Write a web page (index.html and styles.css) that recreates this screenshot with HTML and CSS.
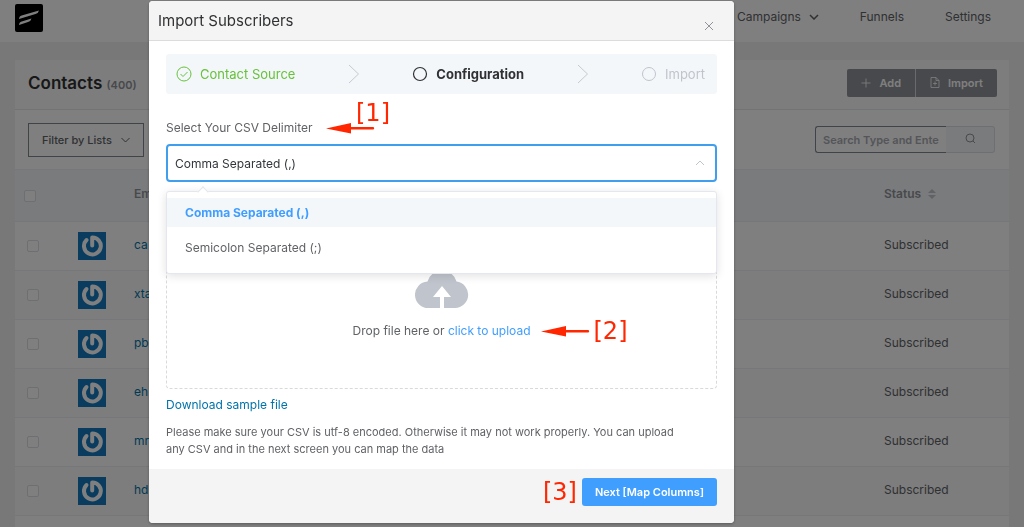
FILE: index.html
```html
<!DOCTYPE html>
<html lang="en">
<head>
    <meta charset="UTF-8">
    <meta name="viewport" content="width=device-width, initial-scale=1.0">
    <title>Import Subscribers</title>
    <link rel="stylesheet" href="styles.css">
</head>
<body>
    <svg class="symbols" aria-hidden="true">
        <symbol id="avatar" viewBox="0 0 28 28">
            <rect width="28" height="28" fill="#1279be"/>
            <path d="M8.500 8 A8.400 8.400 0 1 0 14.200 5.600 V13.500" fill="none" stroke="#fff" stroke-width="4" stroke-linecap="round" stroke-linejoin="round"/>
        </symbol>
        <symbol id="step-arrow" viewBox="0 0 12 20">
            <path d="M1 1 L10.500 10 L1 19" fill="none" stroke="#c6cad1" stroke-width="1"/>
        </symbol>
        <symbol id="red-arrow" viewBox="0 0 49 12">
            <path d="M0 6.500 L25 1 V5 H47.500 Q49 6 47.500 7.500 L25 7.500 V11.500 Z" fill="#ff2600"/>
        </symbol>
    </svg>

    <header class="topbar">
        <a href="#" class="logo" aria-label="Home">
            <svg width="28" height="28" viewBox="0 0 28 28">
                <rect width="28" height="28" rx="2" fill="#000"/>
                <path d="M4 15 Q4 12 7.500 11.200 L24 6.500 Q23.500 9 20.500 10 Z" fill="#fff"/>
                <path d="M4 21 Q4 18 7.500 17.200 L16.500 14.500 Q16 17 13 18 Z" fill="#fff"/>
            </svg>
        </a>
        <nav class="nav">
            <a href="#">Campaigns
                <svg width="10" height="6" viewBox="0 0 10 6"><path d="M1 1 L5 5 L9 1" fill="none" stroke="currentColor" stroke-width="1.500"/></svg>
            </a>
            <a href="#">Funnels</a>
            <a href="#">Settings</a>
        </nav>
    </header>

    <main class="card">
        <div class="card-header">
            <h1>Contacts <small>(400)</small></h1>
            <div class="button-group">
                <button type="button">
                    <svg width="10" height="10" viewBox="0 0 10 10"><path d="M5 0.500 V9.500 M0.500 5 H9.500" stroke="currentColor" stroke-width="0.800"/></svg>
                    Add
                </button>
                <button type="button">
                    <svg width="10" height="11" viewBox="0 0 10 11"><path d="M1 0.500 H6 L9 3.500 V10.500 H1 Z M6 0.500 V3.500 H9 M5 4.500 V8.500 M3 6.500 H7" fill="none" stroke="currentColor" stroke-width="0.800"/></svg>
                    Import
                </button>
            </div>
        </div>
        <div class="toolbar">
            <button type="button" class="filter">Filter by Lists
                <svg width="9" height="6" viewBox="0 0 9 6"><path d="M0.500 1 L4.500 5 L8.500 1" fill="none" stroke="currentColor"/></svg>
            </button>
            <div class="search">
                <input type="text" placeholder="Search Type and Enter..." aria-label="Search">
                <button type="button" aria-label="Search">
                    <svg width="11" height="11" viewBox="0 0 11 11"><circle cx="5" cy="5" r="4" fill="none" stroke="currentColor"/><path d="M8 8 L10 10" stroke="currentColor"/></svg>
                </button>
            </div>
        </div>
        <table class="contacts">
            <thead>
                <tr>
                    <th class="check"><input type="checkbox" aria-label="Select all"></th>
                    <th class="photo"></th>
                    <th>Email</th>
                    <th class="status">Status
                        <svg width="8" height="12" viewBox="0 0 8 12"><path d="M0 5 L4 1 L8 5 Z M0 7 L4 11 L8 7 Z" fill="#c0c4cc"/></svg>
                    </th>
                </tr>
            </thead>
            <tbody>
                <tr>
                    <td class="check"><input type="checkbox" aria-label="Select contact"></td>
                    <td class="photo"><svg class="avatar"><use href="#avatar"/></svg></td>
                    <td><a href="#">ca</a></td>
                    <td>Subscribed</td>
                </tr>
                <tr>
                    <td class="check"><input type="checkbox" aria-label="Select contact"></td>
                    <td class="photo"><svg class="avatar"><use href="#avatar"/></svg></td>
                    <td><a href="#">xta</a></td>
                    <td>Subscribed</td>
                </tr>
                <tr>
                    <td class="check"><input type="checkbox" aria-label="Select contact"></td>
                    <td class="photo"><svg class="avatar"><use href="#avatar"/></svg></td>
                    <td><a href="#">pb</a></td>
                    <td>Subscribed</td>
                </tr>
                <tr>
                    <td class="check"><input type="checkbox" aria-label="Select contact"></td>
                    <td class="photo"><svg class="avatar"><use href="#avatar"/></svg></td>
                    <td><a href="#">eh</a></td>
                    <td>Subscribed</td>
                </tr>
                <tr>
                    <td class="check"><input type="checkbox" aria-label="Select contact"></td>
                    <td class="photo"><svg class="avatar"><use href="#avatar"/></svg></td>
                    <td><a href="#">mr</a></td>
                    <td>Subscribed</td>
                </tr>
                <tr>
                    <td class="check"><input type="checkbox" aria-label="Select contact"></td>
                    <td class="photo"><svg class="avatar"><use href="#avatar"/></svg></td>
                    <td><a href="#">hd</a></td>
                    <td>Subscribed</td>
                </tr>
            </tbody>
        </table>
    </main>

    <div class="overlay">
        <div class="modal" role="dialog" aria-labelledby="modal-title">
            <div class="modal-header">
                <h2 id="modal-title">Import Subscribers</h2>
                <button type="button" class="close" aria-label="Close">
                    <svg width="10" height="10" viewBox="0 0 10 10"><path d="M1 1 L9 9 M9 1 L1 9" stroke="currentColor"/></svg>
                </button>
            </div>
            <div class="modal-body">
                <div class="steps">
                    <div class="step done">
                        <svg width="16" height="16" viewBox="0 0 16 16"><circle cx="8" cy="8" r="7" fill="none" stroke="currentColor"/><path d="M4.500 8 L7 10.500 L11.500 6" fill="none" stroke="currentColor"/></svg>
                        Contact Source
                    </div>
                    <svg class="step-arrow"><use href="#step-arrow"/></svg>
                    <div class="step active">
                        <svg width="16" height="16" viewBox="0 0 16 16"><circle cx="8" cy="8" r="6.500" fill="none" stroke="currentColor" stroke-width="1.200"/></svg>
                        Configuration
                    </div>
                    <svg class="step-arrow"><use href="#step-arrow"/></svg>
                    <div class="step">
                        <svg width="16" height="16" viewBox="0 0 16 16"><circle cx="8" cy="8" r="6.500" fill="none" stroke="currentColor"/></svg>
                        Import
                    </div>
                </div>

                <div class="label-row">
                    <label for="delimiter">Select Your CSV Delimiter</label>
                    <div class="note note-label">
                        <span class="mark">[1]</span>
                        <svg class="red-arrow"><use href="#red-arrow"/></svg>
                    </div>
                </div>
                <div class="select">
                    <select id="delimiter">
                        <option>Comma Separated (,)</option>
                        <option>Semicolon Separated (;)</option>
                    </select>
                    <svg class="caret" width="10" height="6" viewBox="0 0 10 6"><path d="M1 5 L5 1 L9 5" fill="none" stroke="#c0c4cc"/></svg>
                    <ul class="dropdown">
                        <li class="selected">Comma Separated (,)</li>
                        <li>Semicolon Separated (;)</li>
                    </ul>
                </div>

                <div class="dropzone">
                    <svg width="54" height="42" viewBox="0 0 54 42">
                        <path d="M14 41 A13 13 0 0 1 12.500 14.500 A15 15 0 0 1 41.500 14.500 A13.300 13.300 0 0 1 40 41 Z" fill="#c0c4cc"/>
                        <path d="M27 19 L36 30 H29 V42 H25 V30 H18 Z" fill="#fff"/>
                    </svg>
                    <p>Drop file here or <a href="#">click to upload</a>
                        <span class="note note-upload">
                            <svg class="red-arrow"><use href="#red-arrow"/></svg>
                            <span class="mark">[2]</span>
                        </span>
                    </p>
                </div>

                <a href="#" class="sample">Download sample file</a>
                <p class="help">Please make sure your CSV is utf-8 encoded. Otherwise it may not work properly. You can upload any CSV and in the next screen you can map the data</p>
            </div>
            <div class="modal-footer">
                <span class="mark">[3]</span>
                <button type="button" class="primary">Next [Map Columns]</button>
            </div>
        </div>
    </div>
</body>
</html>
```
FILE: styles.css
```css
* {
    box-sizing: border-box;
}
body {
    margin: 0;
    overflow: hidden;
    font-family: Inter, "Liberation Sans", sans-serif;
    font-size: 12px;
    color: #606266;
    background: #f1f1f1;
}
a {
    text-decoration: none;
}
h1, h2, p, ul {
    margin: 0;
    padding: 0;
}
svg {
    flex: none;
}
button, input, select {
    font-family: inherit;
    font-size: 12px;
}
.symbols {
    display: none;
}

/* top navigation */
.topbar {
    display: flex;
    align-items: flex-start;
    justify-content: space-between;
    height: 42px;
    padding: 4px 33px 0 15px;
    background: #fff;
}
.nav {
    display: flex;
    gap: 41px;
    line-height: 25px;
}
.nav a {
    display: flex;
    align-items: center;
    gap: 8px;
    color: #606266;
}

/* contacts card */
.card {
    margin: 18px 15px 0;
    padding-bottom: 20px;
    background: #fff;
}
.card-header {
    display: flex;
    align-items: center;
    justify-content: space-between;
    height: 50px;
    padding: 0 12px 4px 13px;
    border-bottom: 1px solid #e3e8ee;
    background: #fafafa;
}
.card-header h1 {
    font-size: 17px;
    font-weight: 600;
    color: #303133;
}
.card-header small {
    font-size: 11px;
    color: #909399;
}
.button-group {
    display: flex;
}
.button-group button {
    display: flex;
    align-items: center;
    gap: 8px;
    height: 28px;
    padding: 0 14px;
    border: 0;
    border-radius: 2px 0 0 2px;
    background: #909399;
    color: #fff;
    font-size: 11px;
    font-weight: 600;
}
.button-group button + button {
    border-left: 1px solid #d3d4d6;
    border-radius: 0 2px 2px 0;
}
.toolbar {
    display: flex;
    align-items: center;
    justify-content: space-between;
    height: 59px;
    padding: 0 14px 0 13px;
}
.filter {
    display: flex;
    align-items: center;
    gap: 9px;
    height: 34px;
    padding: 0 13px;
    border: 1px solid #7e8993;
    background: #fff;
    color: #606266;
    font-size: 11px;
    font-weight: 500;
}
.search {
    display: flex;
    width: 180px;
    height: 27px;
}
.search input {
    flex: 1;
    min-width: 0;
    padding: 0 7px;
    border: 1px solid #7e8993;
    border-right: 0;
    border-radius: 3px 0 0 3px;
    font-size: 11px;
    font-weight: 600;
}
.search input::placeholder {
    color: #a8abb2;
}
.search button {
    width: 49px;
    border: 1px solid #dcdfe6;
    border-left: 0;
    border-radius: 0 3px 3px 0;
    background: #f5f7fa;
    color: #909399;
}
.contacts {
    width: 100%;
    border-collapse: collapse;
    table-layout: fixed;
}
.contacts th, .contacts td {
    height: 49px;
    padding: 0 0 3px;
    border-bottom: 1px solid #ebeef5;
    text-align: left;
    vertical-align: middle;
}
.contacts th {
    height: 52px;
    padding-bottom: 5px;
    border-top: 1px solid #ebeef5;
    background: #f5f7fa;
    color: #909399;
    font-weight: 600;
}
.contacts tr:nth-child(even) td {
    background: #fafafa;
}
.contacts th.check {
    width: 63px;
    padding: 0 0 0 9px;
}
.contacts td.check {
    padding: 0 0 0 12px;
}
.contacts .photo {
    width: 56px;
    padding: 0;
}
.contacts .status {
    width: 125px;
}
.contacts .status svg {
    margin-left: 4px;
    vertical-align: -2px;
}
.contacts a {
    color: #0073aa;
}
.contacts input {
    display: block;
    width: 12px;
    height: 12px;
    margin: 0;
    border: 1px solid #dcdfe6;
    border-radius: 2px;
    background: #fff;
    appearance: none;
}
.avatar {
    display: block;
    width: 28px;
    height: 28px;
}

/* import dialog */
.overlay {
    position: fixed;
    inset: 0;
    padding: 1px 290px 0 149px;
    background: rgba(0, 0, 0, 0.5);
}
.modal {
    border-radius: 4px;
    background: #fff;
    box-shadow: 0 1px 3px rgba(0, 0, 0, 0.3);
}
.modal-header {
    display: flex;
    align-items: center;
    justify-content: space-between;
    height: 40px;
    padding: 0 20px 0 9px;
    border-bottom: 1px solid #dcdcdc;
    border-radius: 4px 4px 0 0;
    background: #f4f4f4;
}
.modal-header h2 {
    font-size: 15px;
    font-weight: 400;
    color: #303133;
}
.close {
    display: flex;
    margin-top: 10px;
    padding: 0;
    border: 0;
    background: none;
    color: #909399;
}
.modal-body {
    padding: 13px 17px 11px;
}
.steps {
    display: flex;
    align-items: center;
    justify-content: space-between;
    height: 40px;
    padding: 0 12px 0 10px;
    border-radius: 3px;
    background: #f4f7fa;
}
.step {
    display: flex;
    align-items: center;
    gap: 8px;
    font-size: 13px;
    color: #c0c4cc;
}
.step.done {
    color: #67c23a;
}
.step.active {
    font-weight: 700;
    color: #303133;
}
.step-arrow {
    width: 12px;
    height: 20px;
}
.label-row {
    position: relative;
    margin-top: 24px;
    line-height: 20px;
}
.select {
    position: relative;
    margin-top: 6px;
}
.select select {
    display: block;
    width: 100%;
    height: 38px;
    padding: 0 7px;
    border: 2px solid #409eef;
    border-radius: 4px;
    background: #fff;
    color: #32373c;
    appearance: none;
    outline: none;
}
.caret {
    position: absolute;
    top: 16px;
    right: 12px;
}
.dropdown {
    position: absolute;
    top: 47px;
    left: 0;
    right: 0;
    padding: 6px 0 5px;
    border: 1px solid #e4e7ed;
    border-radius: 3px;
    background: #fff;
    box-shadow: 0 2px 10px rgba(0, 0, 0, 0.12);
    list-style: none;
}
.dropdown::before {
    content: "";
    position: absolute;
    top: -4px;
    left: 32px;
    width: 7px;
    height: 7px;
    border: 1px solid #e4e7ed;
    border-right: 0;
    border-bottom: 0;
    background: #fff;
    transform: rotate(45deg);
}
.dropdown li {
    margin-bottom: 6px;
    padding: 0 18px;
    line-height: 29px;
}
.dropdown .selected {
    background: #f4f7fa;
    color: #409eff;
    font-weight: 700;
}
.dropzone {
    display: flex;
    flex-direction: column;
    align-items: center;
    gap: 12px;
    height: 149px;
    margin-top: 58px;
    padding-top: 26px;
    border: 1px dashed #d9d9d9;
    border-radius: 4px;
}
.dropzone p {
    position: relative;
    line-height: 20px;
}
.dropzone a {
    color: #409eff;
}
.sample {
    display: block;
    margin-top: 6px;
    line-height: 20px;
    color: #0073aa;
}
.help {
    margin-top: 9px;
    padding-right: 22px;
    font-size: 11px;
    line-height: 17px;
}
.modal-footer {
    display: flex;
    align-items: center;
    justify-content: flex-end;
    gap: 5px;
    height: 54px;
    padding: 0 17px 9px;
    border-radius: 0 0 4px 4px;
    background: #f4f4f4;
}
.primary {
    height: 28px;
    padding: 0 13px;
    border: 0;
    border-radius: 3px;
    background: #409eff;
    color: #fff;
    font-size: 11px;
    font-weight: 600;
}

/* red tutorial marks */
.mark {
    font-family: "DejaVu Sans", sans-serif;
    font-size: 24px;
    line-height: 28px;
    color: #ff2600;
}
.red-arrow {
    width: 49px;
    height: 12px;
}
.note {
    position: absolute;
    display: flex;
}
.note-label {
    left: 160px;
    bottom: 4px;
    flex-direction: column;
}
.note-label .mark {
    margin: 0 0 -5px 30px;
}
.note-upload {
    top: -4px;
    left: 100%;
    align-items: center;
    gap: 4px;
    padding-left: 10px;
}
```
